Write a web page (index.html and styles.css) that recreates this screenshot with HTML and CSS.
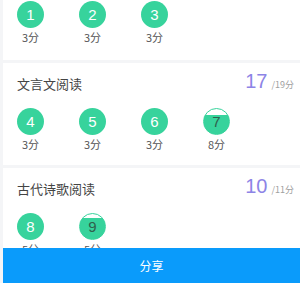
FILE: index.html
```html
<!DOCTYPE html>
<html lang="zh-CN">

<head>
  <meta charset="UTF-8">
  <meta name="viewport" content="width=device-width, initial-scale=1.0">
  <title>成绩</title>
  <link rel="stylesheet" href="styles.css">
</head>

<body>
  <div id="report">
    <div class="section first">
      <div class="items">
        <div class="item"><div class="ball">1</div><div class="pts">3分</div></div>
        <div class="item"><div class="ball">2</div><div class="pts">3分</div></div>
        <div class="item"><div class="ball">3</div><div class="pts">3分</div></div>
      </div>
    </div>

    <div class="section">
      <div class="head">
        <span class="title">文言文阅读</span>
        <span class="score"><b>17</b>/19分</span>
      </div>
      <div class="items">
        <div class="item"><div class="ball">4</div><div class="pts">3分</div></div>
        <div class="item"><div class="ball">5</div><div class="pts">3分</div></div>
        <div class="item"><div class="ball">6</div><div class="pts">3分</div></div>
        <div class="item"><div class="ball part" style="--cap: 22%">7</div><div class="pts">8分</div></div>
      </div>
    </div>

    <div class="section">
      <div class="head">
        <span class="title">古代诗歌阅读</span>
        <span class="score"><b>10</b>/11分</span>
      </div>
      <div class="items">
        <div class="item"><div class="ball">8</div><div class="pts">5分</div></div>
        <div class="item"><div class="ball part" style="--cap: 15%">9</div><div class="pts">5分</div></div>
      </div>
    </div>
  </div>

  <div id="share-btn">分享</div>
</body>

</html>
```

FILE: styles.css
```css
body {
  font-family: 'Noto Sans CJK SC', 'Noto Sans', sans-serif;
  background-color: #f4f5f7;
  margin: 0;
  height: 283px;
  overflow: hidden;
}

#report {
  margin-left: 3px;
}

.section {
  background: #ffffff;
  margin-bottom: 3px;
  padding: 11px 6px 14px 14px;
}

.section.first {
  padding-top: 1px;
  height: 60px;
  box-sizing: border-box;
}

.head {
  display: flex;
  justify-content: space-between;
  align-items: flex-start;
  height: 20px;
  margin-bottom: 14px;
}

.title {
  font-size: 13px;
  color: #444;
  line-height: 20px;
}

.score {
  font-size: 9px;
  line-height: 20px;
  color: #a0a0a0;
  margin-top: -3px;
}

.score b {
  font-family: 'Liberation Sans', sans-serif;
  font-weight: normal;
  font-size: 20px;
  color: #8d84e6;
  margin-right: 4px;
}

.items {
  display: flex;
  gap: 35px;
}

.item {
  display: flex;
  flex-direction: column;
  align-items: center;
  width: 27px;
}

.ball {
  width: 27px;
  height: 27px;
  border-radius: 50%;
  background: #37d39c;
  color: #ffffff;
  font-family: 'Liberation Sans', sans-serif;
  font-size: 15px;
  display: flex;
  align-items: center;
  justify-content: center;
  box-sizing: border-box;
}

.ball.part {
  border: 1px solid #37d39c;
  background: linear-gradient(to bottom, #ffffff var(--cap), #37d39c var(--cap));
  color: #2f5f4d;
}

.pts {
  font-size: 11px;
  color: #555;
  line-height: 14px;
  margin-top: 2px;
  white-space: nowrap;
}

#share-btn {
  position: fixed;
  left: 3px;
  right: 0;
  bottom: 0;
  height: 35px;
  background: #0a9bfb;
  color: #ffffff;
  font-size: 12px;
  display: flex;
  align-items: center;
  justify-content: center;
}
```
